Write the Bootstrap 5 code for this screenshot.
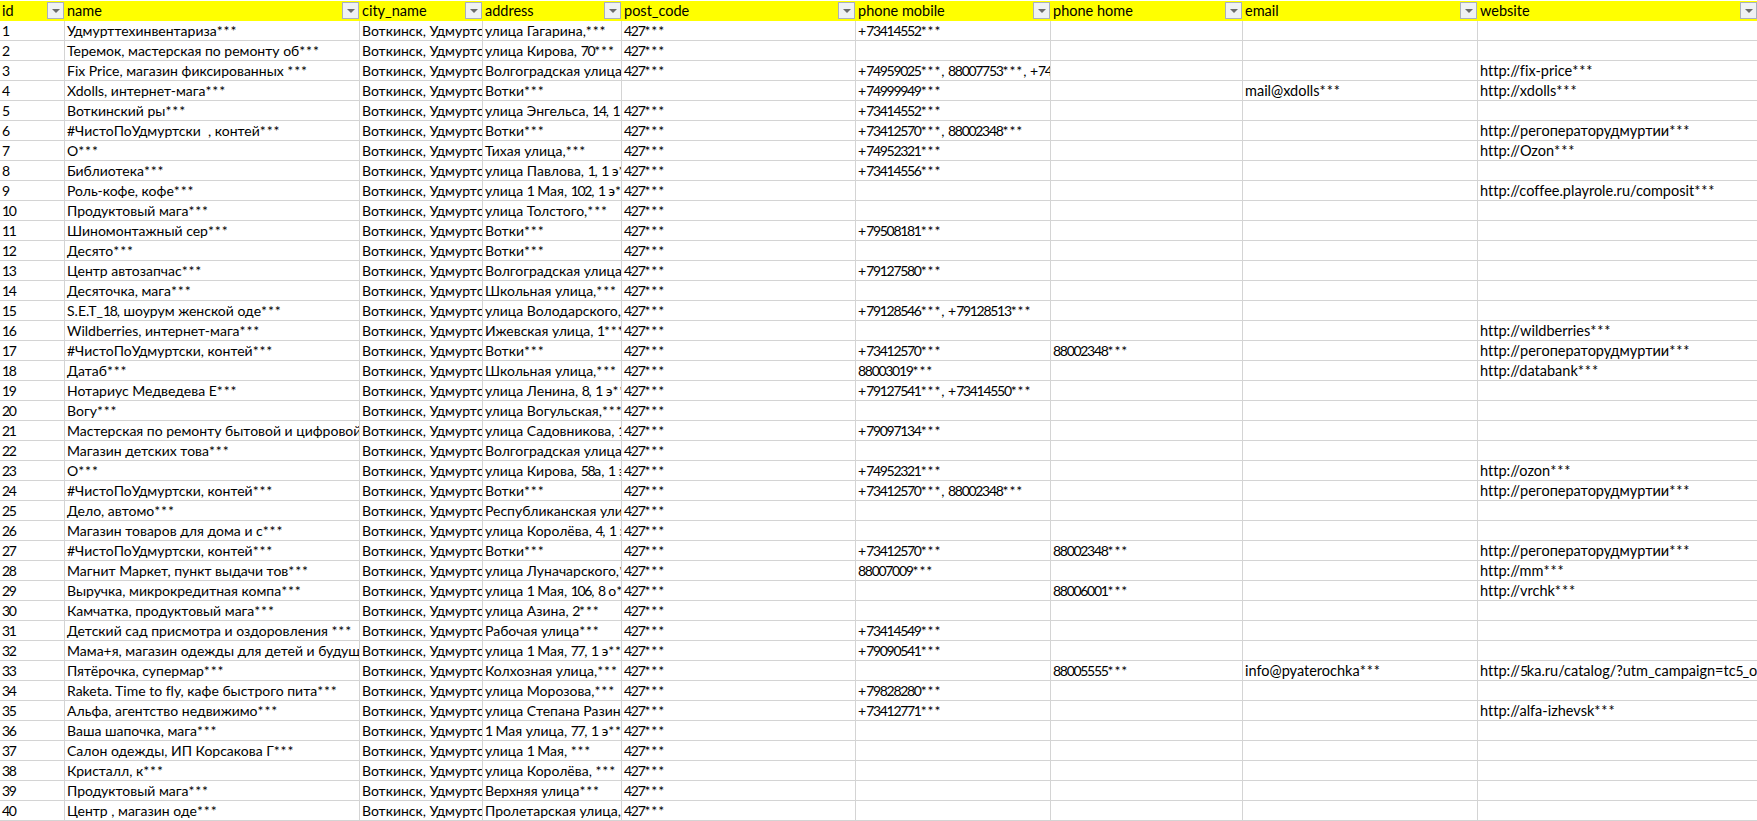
<!DOCTYPE html>
<html lang="ru"><head><meta charset="utf-8"><title>Sheet</title>
<link rel="stylesheet" href="https://cdn.jsdelivr.net/npm/bootstrap@5.3.0/dist/css/bootstrap.min.css">
<style>
html,body{margin:0;height:821px;overflow:hidden;background:#fff}
body{padding-top:1px;font-family:Lato,"Open Sans","Liberation Sans",sans-serif;font-size:14px;color:#000;font-variant-ligatures:none}
.sheet{table-layout:fixed;width:1757px;border-collapse:separate;border-spacing:0;margin:0}
.sheet td,.sheet th{height:20px;padding:0 0 0 2px;border:0;border-right:1px solid #d4d4d4;border-bottom:1px solid #d4d4d4;white-space:pre;overflow:hidden;font-weight:400;line-height:19px;vertical-align:middle}
.sheet th{background:#ff0;border-color:#ff0;font-size:14.5px}
.sheet td:nth-child(n+8){font-size:14.5px}
.sheet td:last-child,.sheet th:last-child{border-right:0}
.dg{font-size:14px;letter-spacing:-1.3px}
.st{letter-spacing:.9px}
.filter-btn{flex:none;width:17px;height:17px;border:1px solid #a9b0bc;background:#eff1f3;display:flex;align-items:center;justify-content:center}
.filter-btn i{display:block;width:0;height:0;border-left:4px solid transparent;border-right:4px solid transparent;border-top:4px solid #6b6b6b}
</style></head><body>
<table class="sheet"><colgroup><col style="width:65px"><col style="width:295px"><col style="width:123px"><col style="width:139px"><col style="width:234px"><col style="width:195px"><col style="width:192px"><col style="width:235px"><col></colgroup>
<thead id="h"></thead><tbody id="b"></tbody></table>
<script>
const C="Воткинск, Удмуртская",P="427***";
const R=[
["Удмурттехинвентариза***","улица Гагарина,***",P,"+73414552***","","",""],
["Теремок, мастерская по ремонту об***","улица Кирова, 70***",P,"","","",""],
["Fix Price, магазин фиксированных ***","Волгоградская улица, 1",P,"+74959025***, 88007753***, +74959025","","","http://fix-price***"],
["Xdolls, интернет-мага***","Вотки***","","+74999949***","","mail@xdolls***","http://xdolls***"],
["Воткинский ры***","улица Энгельса, 14, 1 э",P,"+73414552***","","",""],
["#ЧистоПоУдмуртски  , контей***","Вотки***",P,"+73412570***, 88002348***","","","http://регоператорудмуртии***"],
["О***","Тихая улица,***",P,"+74952321***","","","http://Ozon***"],
["Библиотека***","улица Павлова, 1, 1 э***",P,"+73414556***","","",""],
["Роль-кофе, кофе***","улица 1 Мая, 102, 1 э***",P,"","","","http://coffee.playrole.ru/composit***"],
["Продуктовый мага***","улица Толстого,***",P,"","","",""],
["Шиномонтажный сер***","Вотки***",P,"+79508181***","","",""],
["Десято***","Вотки***",P,"","","",""],
["Центр автозапчас***","Волгоградская улица***",P,"+79127580***","","",""],
["Десяточка, мага***","Школьная улица,***",P,"","","",""],
["S.E.T_18, шоурум женской оде***","улица Володарского, 1",P,"+79128546***, +79128513***","","",""],
["Wildberries, интернет-мага***","Ижевская улица, 1***",P,"","","","http://wildberries***"],
["#ЧистоПоУдмуртски, контей***","Вотки***",P,"+73412570***","88002348***","","http://регоператорудмуртии***"],
["Датаб***","Школьная улица,***",P,"88003019***","","","http://databank***"],
["Нотариус Медведева Е***","улица Ленина, 8, 1 э***",P,"+79127541***, +73414550***","","",""],
["Вогу***","улица Вогульская,***",P,"","","",""],
["Мастерская по ремонту бытовой и цифровой техники","улица Садовникова, 14",P,"+79097134***","","",""],
["Магазин детских това***","Волгоградская улица, 1",P,"","","",""],
["О***","улица Кирова, 58а, 1 эт",P,"+74952321***","","","http://ozon***"],
["#ЧистоПоУдмуртски, контей***","Вотки***",P,"+73412570***, 88002348***","","","http://регоператорудмуртии***"],
["Дело, автомо***","Республиканская улица",P,"","","",""],
["Магазин товаров для дома и с***","улица Королёва, 4, 1 эт",P,"","","",""],
["#ЧистоПоУдмуртски, контей***","Вотки***",P,"+73412570***","88002348***","","http://регоператорудмуртии***"],
["Магнит Маркет, пункт выдачи тов***","улица Луначарского,***",P,"88007009***","","","http://mm***"],
["Выручка, микрокредитная компа***","улица 1 Мая, 106, 8 о***",P,"","88006001***","","http://vrchk***"],
["Камчатка, продуктовый мага***","улица Азина, 2***",P,"","","",""],
["Детский сад присмотра и оздоровления ***","Рабочая улица***",P,"+73414549***","","",""],
["Мама+я, магазин одежды для детей и будущих мам","улица 1 Мая, 77, 1 э***",P,"+79090541***","","",""],
["Пятёрочка, супермар***","Колхозная улица,***",P,"","88005555***","info@pyaterochka***","http://5ka.ru/catalog/?utm_campaign=tc5_online"],
["Raketa. Time to fly, кафе быстрого пита***","улица Морозова,***",P,"+79828280***","","",""],
["Альфа, агентство недвижимо***","улица Степана Разина,",P,"+73412771***","","","http://alfa-izhevsk***"],
["Ваша шапочка, мага***","1 Мая улица, 77, 1 э***",P,"","","",""],
["Салон одежды, ИП Корсакова Г***","улица 1 Мая, ***",P,"","","",""],
["Кристалл, к***","улица Королёва, ***",P,"","","",""],
["Продуктовый мага***","Верхняя улица***",P,"","","",""],
["Центр , магазин оде***","Пролетарская улица, 1",P,"","","",""]];
const H=["id","name","city_name","address","post_code","phone mobile","phone home","email","website"];
const fmt=t=>String(t).replace(/\d+/g,m=>`<span class="dg">${m}</span>`).replace(/\*+/g,m=>`<span class="st">${m}</span>`);
document.getElementById('h').innerHTML='<tr>'+H.map(t=>`<th><div class="d-flex justify-content-between align-items-center"><span>${t}</span><span class="filter-btn"><i></i></span></div></th>`).join('')+'</tr>';
document.getElementById('b').innerHTML=R.map((r,i)=>{const c=[i+1,r[0],C,...r.slice(1)];return '<tr>'+c.map(t=>`<td>${fmt(t)}</td>`).join('')+'</tr>'}).join('');
</script>
<script src="https://cdn.jsdelivr.net/npm/bootstrap@5.3.0/dist/js/bootstrap.bundle.min.js"></script>
</body></html>
